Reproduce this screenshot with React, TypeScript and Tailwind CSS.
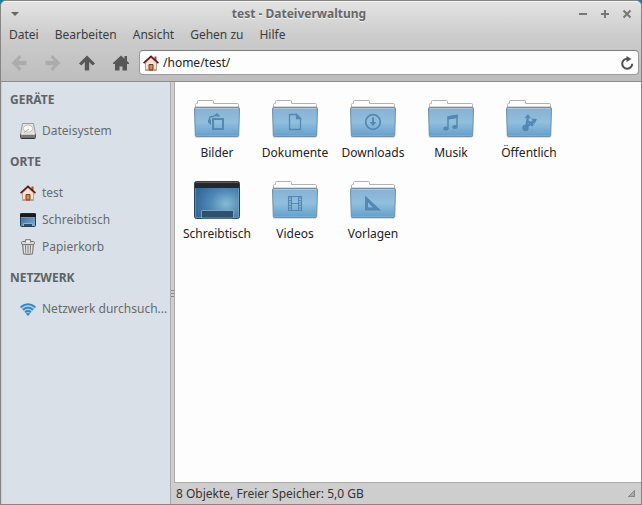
import type { ReactNode } from 'react'

function HomeIcon() {
  return (
    <svg width="16" height="16" viewBox="0 0 16 16" className="shrink-0">
      <rect x="11.5" y="1.5" width="2" height="4" fill="#a34a40" />
      <path d="M2.5 8 8 2.5 13.5 8v7.5h-11z" fill="#f4e3d4" stroke="#b79f90" />
      <path d="M6 9.5h4V15H6z" fill="#d98a4e" stroke="#7d3a17" />
      <path d="M.6 8.2 8 1.4l7.4 6.8" fill="none" stroke="#5c171b" strokeWidth="1.7" />
      <path d="M2 14.5h3m6 0h3" stroke="#c99c84" />
    </svg>
  )
}

function DriveIcon() {
  return (
    <svg width="16" height="16" viewBox="0 0 16 16" className="shrink-0">
      <path d="M2.5.5h11l2 11H.5z" fill="#e4e4e2" stroke="#9b9b99" />
      <ellipse cx="8" cy="5.5" rx="4.6" ry="3.6" fill="#f8f8f7" stroke="#bfbfbd" />
      <path d="m4 9.5 5-3.5" stroke="#aaa" />
      <path d="M.5 11.5h15v3q0 1-1 1h-13q-1 0-1-1z" fill="#777" stroke="#555" />
      <path d="M1 11.5h14" stroke="#c9c9c7" />
      <path d="M1.500 15.500h13" stroke="#2e2e2e" />
    </svg>
  )
}

function SmallDesktopIcon() {
  return (
    <svg width="16" height="16" viewBox="0 0 16 16" className="shrink-0">
      <defs>
        <linearGradient id="desk-small" x1="0" y1="0" x2="1" y2="1">
          <stop offset="0" stopColor="#33618f" />
          <stop offset="1" stopColor="#7fb2d4" />
        </linearGradient>
      </defs>
      <rect x=".5" y="1.5" width="15" height="13" rx="1" fill="url(#desk-small)" stroke="#24405e" />
      <path d="M0 1.5h16V5H0z" fill="#17191d" />
      <path d="M1 5.5h14" stroke="#7095b8" />
      <path d="M3.5 14v-2.500h9V14" fill="#344a63" stroke="#8db3cf" />
    </svg>
  )
}

function TrashIcon() {
  return (
    <svg width="16" height="16" viewBox="0 0 16 16" className="shrink-0">
      <path d="M2.5 5h11l-1 10q-4.500 1-9 0z" fill="#c4c4c4" stroke="#777" />
      <path d="m5.500 6.500.3 7.500M8 6.500V14m2.500-7.500-.3 7.500" stroke="#707070" />
      <path d="m4.300 6.500.5 7.500m2-7.500V14m2.400-7.500V14m2.500-7.500-.5 7.500" stroke="#f3f3f3" strokeWidth=".8" />
      <rect x="1.5" y="2.5" width="13" height="3" rx="1.3" fill="#dedede" stroke="#777" />
      <path d="M5.5 3.500V.7h5v2.800" fill="#eee" stroke="#777" />
    </svg>
  )
}

function NetworkIcon() {
  return (
    <svg width="16" height="16" viewBox="0 0 16 16" className="shrink-0">
      <path d="M0 6q8-7 16 0l-8 9z" fill="#a5cdea" />
      <g fill="none" stroke="#3186c5" strokeWidth="1.8">
        <path d="M.6 6.200q7.400-6.200 14.800 0" />
        <path d="M3 8.700q5-4.200 10 0" />
        <path d="M5.200 11.200q2.800-2.400 5.600 0" />
      </g>
      <path d="m5.900 12.600 2.100 2.400 2.100-2.400q-2.100-1.400-4.200 0z" fill="#3186c5" />
    </svg>
  )
}

function Folder({ children }: { children: ReactNode }) {
  return (
    <svg width="48" height="40" viewBox="1 0 48 40">
      <defs>
        <linearGradient id="folder-front" x1="0" y1="0" x2="0" y2="1">
          <stop offset="0" stopColor="#86b0d2" />
          <stop offset=".5" stopColor="#92bfde" />
          <stop offset="1" stopColor="#629fcb" />
        </linearGradient>
      </defs>
      <path d="M3 38.5h43" stroke="#000" strokeOpacity=".13" />
      <path d="M3.5 10V5.5q0-1 1-1h1v-2q0-1 1-1h14q1 0 1 1v2h24q1 0 1 1V10z" fill="#fdfdfd" stroke="#b5b1b2" />
      <path d="M4 7.5h42" stroke="#ddd9d9" />
      <path d="M2.5 9.5q0-1 1-1h43q1 0 1 1l-.8 27q0 1-1 1H4.300q-1 0-1-1z" fill="url(#folder-front)" stroke="#6d8da8" />
      <path d="M4 9.5h42" stroke="#a9cbe4" />
      <path d="M4.500 36.5h41" stroke="#74add5" />
      <g fill="none" stroke="#5588b1" strokeWidth="1.3">
        {children}
      </g>
    </svg>
  )
}

function DesktopIcon() {
  return (
    <svg width="48" height="40" viewBox="1 0 48 40">
      <defs>
        <radialGradient id="desk-glow" cx=".7" cy=".6" r=".7">
          <stop offset="0" stopColor="#86bbd6" />
          <stop offset=".5" stopColor="#5089b6" />
          <stop offset="1" stopColor="#33689b" />
        </radialGradient>
      </defs>
      <rect x="2.5" y="1.5" width="45" height="37" rx="2" fill="url(#desk-glow)" stroke="#263f59" />
      <path d="M3 8V3q0-1 1-1h42q1 0 1 1v5z" fill="#25272a" />
      <path d="M4 2.5h42" stroke="#5c5e60" />
      <path d="M3.5 8.5v28q0 1 1 1h41q1 0 1-1v-28" fill="none" stroke="#7ea6c7" strokeOpacity=".6" />
      <path d="M9.500 38v-7.500h32V38z" fill="#2f4f70" stroke="#8fb3cc" strokeOpacity=".75" />
    </svg>
  )
}

const groups = [
  { title: 'GERÄTE', items: [{ name: 'Dateisystem', icon: <DriveIcon /> }] },
  {
    title: 'ORTE',
    items: [
      { name: 'test', icon: <HomeIcon /> },
      { name: 'Schreibtisch', icon: <SmallDesktopIcon /> },
      { name: 'Papierkorb', icon: <TrashIcon /> },
    ],
  },
  { title: 'NETZWERK', items: [{ name: 'Netzwerk durchsuch...', icon: <NetworkIcon /> }] },
]

const files = [
  {
    name: 'Bilder',
    icon: (
      <Folder>
        <path d="M21 20h10v10H21z" strokeWidth="2" />
        <path d="m20.500 17.500 4.500-3.500 3.500 3.500zM19 20.500v5.500l-3-2.500v-3z" fill="#5588b1" stroke="none" />
        <path d="M17.500 21v-1.500q0-2 2-2H22" />
      </Folder>
    ),
  },
  {
    name: 'Dokumente',
    icon: (
      <Folder>
        <path d="M19.5 15.5h7l4 4v11h-11z" />
        <path d="M26.5 15.5v4h4z" fill="#5588b1" />
      </Folder>
    ),
  },
  {
    name: 'Downloads',
    icon: (
      <Folder>
        <circle cx="25" cy="23" r="7.300" strokeWidth="1.700" />
        <path d="M25 18.5V26" strokeWidth="2" />
        <path d="M21.500 23h7L25 27z" fill="#5588b1" stroke="none" />
      </Folder>
    ),
  },
  {
    name: 'Musik',
    icon: (
      <Folder>
        <path d="M22 29.500V18l9-1.500V28" strokeWidth="1.500" />
        <path d="m21.300 17.500 10.400-1.700V19l-10.400 1.700z" fill="#5588b1" stroke="none" />
        <ellipse cx="20" cy="29.500" rx="2.700" ry="2.100" fill="#5588b1" stroke="none" />
        <ellipse cx="29" cy="28" rx="2.700" ry="2.100" fill="#5588b1" stroke="none" />
      </Folder>
    ),
  },
  {
    name: 'Öffentlich',
    icon: (
      <Folder>
        <circle cx="21.500" cy="29" r="3.200" fill="#5588b1" stroke="none" />
        <path d="m22 28 2-10M22 28l8-6M24 22.500l4 2" strokeWidth="2.200" />
        <path d="m20.500 19 3.500-4 3 4.500zM27.500 19.500l5.500.5-2.500 5z" fill="#5588b1" stroke="none" />
        <circle cx="28" cy="25.500" r="1.700" fill="#5588b1" stroke="none" />
      </Folder>
    ),
  },
  { name: 'Schreibtisch', icon: <DesktopIcon /> },
  {
    name: 'Videos',
    icon: (
      <Folder>
        <path d="M18.500 16.500h13v14h-13zM21.500 16.500v14M28.500 16.500v14M21.500 23.500h7" strokeWidth="1.100" />
        <path d="M20 17.500v13M30 17.500v13" strokeWidth="2" strokeDasharray="1 1.500" />
      </Folder>
    ),
  },
  {
    name: 'Vorlagen',
    icon: (
      <Folder>
        <path d="M17 15.500v15h16zm3 7 5 5h-5z" fill="#5588b1" fillRule="evenodd" stroke="none" />
      </Folder>
    ),
  },
]

const menus = ['Datei', 'Bearbeiten', 'Ansicht', 'Gehen zu', 'Hilfe']

const tools = [
  { label: 'Zurück', path: 'M8.500 0 10.500 2.300 7 5.800h8.500v4.400H7l3.500 3.500-2 2.300L.5 8z', disabled: true },
  { label: 'Vor', path: 'M7.500 0 5.500 2.300 9 5.800H.5v4.400H9l-3.500 3.500 2 2.300 8-8z', disabled: true },
  { label: 'Übergeordneter Ordner', path: 'M8 .5 0 8.500l2.300 2L5.800 7v8.500h4.400V7l3.500 3.500 2.300-2z', disabled: false },
  { label: 'Persönlicher Ordner', path: 'M8 .5 0 8v1h2v6.500h4.500v-4h3v4H14V9h2V8l-2-2V1h-2.500v2.700z', disabled: false },
]

const windowButtons = [
  { label: 'Minimieren', path: 'M1 5h8' },
  { label: 'Maximieren', path: 'M1 5h8M5 1v8' },
  { label: 'Schließen', path: 'm1.500 1.500 7 7m0-7-7 7' },
]

function TitleBar() {
  return (
    <header className="flex h-6 items-center justify-between pl-[7px] pr-[3px]">
      <button aria-label="Fenstermenü" className="grid h-5 w-[14px] place-items-center">
        <svg width="10" height="6" viewBox="0 0 10 6">
          <path d="M1 1h8L5 5z" fill="#666" />
        </svg>
      </button>
      <h1 className="flex-1 pl-1 text-center text-[12px] font-bold text-[#686868] [text-shadow:0_1px_#f2f2f2]">
        test - Dateiverwaltung
      </h1>
      {windowButtons.map((b) => (
        <button key={b.label} aria-label={b.label} className="grid h-5 w-[22px] place-items-center">
          <svg width="10" height="10" viewBox="0 0 10 10" fill="none" stroke="#777" strokeWidth="2">
            <path d={b.path} />
          </svg>
        </button>
      ))}
    </header>
  )
}

function Toolbar() {
  return (
    <div className="flex h-[37px] items-center border-b border-[#8c8c8c] pb-px pl-px pr-[2px]">
      {tools.map((t) => (
        <button key={t.label} aria-label={t.label} disabled={t.disabled} className="grid h-6 w-[34px] shrink-0 place-items-center text-[#575757] disabled:text-[#acacac]">
          <svg width="16" height="16" viewBox="0 0 16 16" fill="currentColor">
            <path d={t.path} />
          </svg>
        </button>
      ))}
      <div className="ml-px flex h-[25px] min-w-0 flex-1 items-center gap-1 rounded-sm border border-[#999] border-t-[#7d7d7d] bg-[#fdfdfd] px-[3px]">
        <HomeIcon />
        <input aria-label="Pfad" defaultValue="/home/test/" className="min-w-0 flex-1 bg-transparent text-[12px] text-[#222] outline-none" />
        <button aria-label="Neu laden" className="grid size-4 place-items-center">
          <svg width="14" height="14" viewBox="0 0 14 14">
            <path d="M7.500 2.700A5 5 0 1 0 12.200 7.700" fill="none" stroke="#505050" strokeWidth="2" />
            <path d="M6.500 0v6L11.500 3z" fill="#505050" />
          </svg>
        </button>
      </div>
    </div>
  )
}

function Sidebar() {
  return (
    <aside className="w-[169px] shrink-0 border-r border-[#aaa] bg-[#dae0e7]">
      {groups.map((g) => (
        <section key={g.title}>
          <h2 className="flex h-[35px] items-center pl-2 font-bold text-[#5f6365]">{g.title}</h2>
          {g.items.map((item) => (
            <button key={item.name} className="flex h-[27px] w-full items-center gap-[6px] pl-[18px] text-left text-[#686b6e]">
              {item.icon}
              <span className="whitespace-nowrap">{item.name}</span>
            </button>
          ))}
        </section>
      ))}
    </aside>
  )
}

export default function App() {
  return (
    <div className="bg-[#1d7f94]">
      <div className="flex min-h-screen flex-col overflow-hidden rounded-t-md border border-[#858585] bg-[#cecece] font-['Noto_Sans',sans-serif] text-[12px] leading-4 text-[#333]">
        <div className="border-t border-[#f5f5f5] bg-linear-to-b from-[#e3e3e3] via-[#cdcdcd] via-40% to-[#bdbdbd]">
          <TitleBar />
          <nav className="flex h-[19px] items-center pb-[2px]">
            {menus.map((m) => (
              <button key={m} className="px-2 text-[#3c3c3c]">
                {m}
              </button>
            ))}
          </nav>
          <Toolbar />
        </div>
        <div className="flex flex-1 pl-px">
          <Sidebar />
          <div className="flex w-[3px] shrink-0 flex-col items-center justify-center gap-[2px]">
            <i className="h-px w-[3px] bg-[#888]" />
            <i className="h-px w-[3px] bg-[#888]" />
            <i className="h-px w-[3px] bg-[#888]" />
          </div>
          <div className="flex min-w-0 flex-1 flex-col">
            <main className="flex flex-1 flex-wrap content-start border-b border-l border-[#aaa] bg-[#fdfdfd] pl-[3px] pt-[17px]">
              {files.map((f) => (
                <button key={f.name} className="flex h-[81px] w-[78px] flex-col items-center gap-[6px] text-[#222]">
                  {f.icon}
                  <span>{f.name}</span>
                </button>
              ))}
            </main>
            <footer className="flex h-[21px] items-center justify-between pl-[2px] pr-[6px]">
              <span>8 Objekte, Freier Speicher: 5,0 GB</span>
              <svg width="7" height="7" viewBox="0 0 7 7">
                <path d="M7 0v7H0z" fill="#aaa" />
                <path d="M0 7 7 0M0 6.500h7M6.500 0v7" stroke="#888" />
              </svg>
            </footer>
          </div>
        </div>
      </div>
    </div>
  )
}
